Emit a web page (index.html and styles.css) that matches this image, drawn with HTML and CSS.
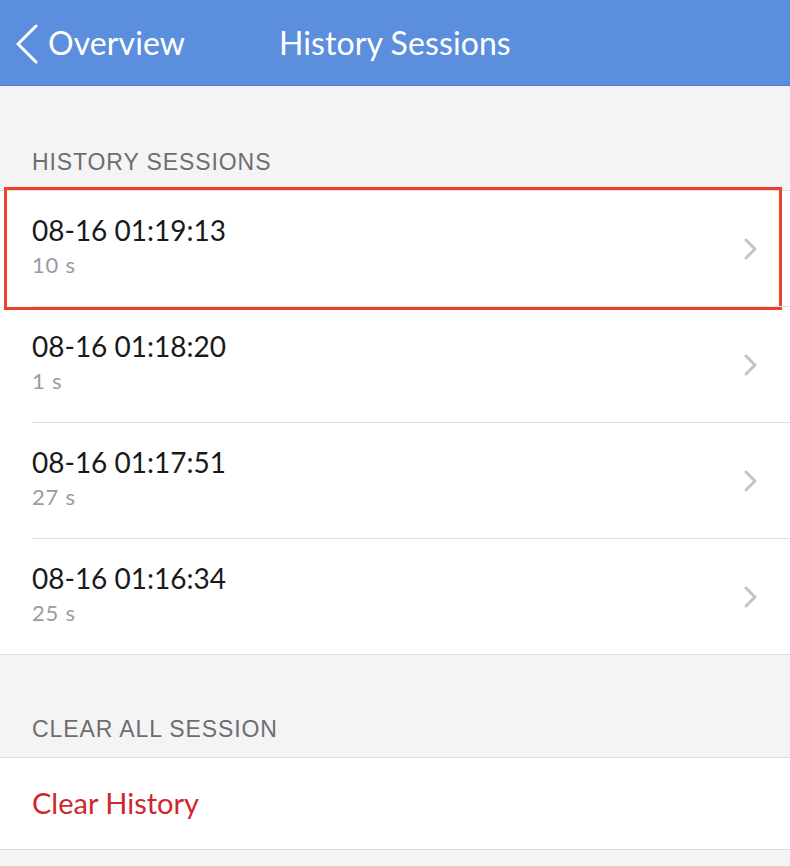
FILE: index.html
```html
<!DOCTYPE html>
<html>
<head>
<meta charset="utf-8">
<link rel="stylesheet" href="styles.css">
</head>
<body>
<div class="navbar">
  <div class="back">
    <svg class="back-icon" width="24" height="40" viewBox="0 0 24 40"><path d="M21 2 L3 20 L21 38" fill="none" stroke="#ffffff" stroke-width="3" stroke-linecap="round" stroke-linejoin="round"/></svg>
    <span class="back-text">Overview</span>
  </div>
  <div class="title">History Sessions</div>
</div>
<div class="section-header first">HISTORY SESSIONS</div>
<div class="list">
  <div class="row highlighted">
    <div class="row-text"><div class="row-title">08-16 01:19:13</div><div class="row-sub">10 s</div></div>
    <svg class="chev" width="16" height="24" viewBox="0 0 16 24"><path d="M3 3 L12 12 L3 21" fill="none" stroke="#c4c4c8" stroke-width="3" stroke-linecap="round" stroke-linejoin="round"/></svg>
    <div class="highlight-box"></div>
  </div>
  <div class="row">
    <div class="row-text"><div class="row-title">08-16 01:18:20</div><div class="row-sub">1 s</div></div>
    <svg class="chev" width="16" height="24" viewBox="0 0 16 24"><path d="M3 3 L12 12 L3 21" fill="none" stroke="#c4c4c8" stroke-width="3" stroke-linecap="round" stroke-linejoin="round"/></svg>
  </div>
  <div class="row">
    <div class="row-text"><div class="row-title">08-16 01:17:51</div><div class="row-sub">27 s</div></div>
    <svg class="chev" width="16" height="24" viewBox="0 0 16 24"><path d="M3 3 L12 12 L3 21" fill="none" stroke="#c4c4c8" stroke-width="3" stroke-linecap="round" stroke-linejoin="round"/></svg>
  </div>
  <div class="row last">
    <div class="row-text"><div class="row-title">08-16 01:16:34</div><div class="row-sub">25 s</div></div>
    <svg class="chev" width="16" height="24" viewBox="0 0 16 24"><path d="M3 3 L12 12 L3 21" fill="none" stroke="#c4c4c8" stroke-width="3" stroke-linecap="round" stroke-linejoin="round"/></svg>
  </div>
</div>
<div class="section-header second">CLEAR ALL SESSION</div>
<div class="list">
  <div class="row action last">
    <div class="action-text">Clear History</div>
  </div>
</div>
</body>
</html>
```
FILE: styles.css
```css
* { box-sizing: border-box; }
html, body { margin: 0; padding: 0; }
body {
  width: 790px;
  height: 866px;
  overflow: hidden;
  background: #f4f4f4;
  font-family: "Lato", "Open Sans", sans-serif;
}
.navbar {
  height: 86px;
  background: #5b8edd;
  display: flex;
  align-items: center;
  color: #fff;
  border-bottom: 1px solid #4f80cc;
}
.back {
  display: flex;
  align-items: center;
  padding-left: 15px;
  width: 279px;
}
.back-icon { margin-right: 9px; margin-top: 2px; }
.back-text, .title {
  font-family: "Lato", sans-serif;
  font-size: 32px;
  font-weight: 400;
  letter-spacing: 0.1px;
}
.section-header {
  font-family: "Liberation Sans", Arial, sans-serif;
  font-size: 23px;
  color: #6d6d72;
  padding-left: 32px;
  letter-spacing: 0.9px;
}
.section-header.first { padding-top: 63px; height: 104px; }
.section-header.second { padding-top: 61px; height: 102px; }
.list {
  background: #fff;
  border-top: 1px solid #dcdcdc;
  border-bottom: 1px solid #dcdcdc;
}
.row {
  position: relative;
  height: 116px;
  display: flex;
  align-items: center;
  padding-left: 32px;
  padding-right: 32px;
}
.row.last { height: 115px; }
.row::after {
  content: "";
  position: absolute;
  left: 32px;
  right: 0;
  bottom: 0;
  height: 1px;
  background: #e0e0e0;
}
.row.last::after { display: none; }
.row-text { flex: 1; display: flex; flex-direction: column; }
.row-title {
  font-size: 28px;
  color: #1a1a1a;
  line-height: 36px;
  margin-top: -6px;
}
.row-sub {
  font-size: 22px;
  color: #9b9b9f;
  line-height: 30px;
  margin-top: 2px;
  letter-spacing: 0.8px;
}
.chev { flex: none; margin-right: -1px; }
.highlight-box {
  position: absolute;
  left: 4px;
  right: 8px;
  top: -4px;
  bottom: -3px;
  border: 3px solid #e8432b;
}
.row.action { height: 91px; }
.action-text {
  font-size: 29px;
  color: #d0262c;
  margin-top: -2px;
}
```
